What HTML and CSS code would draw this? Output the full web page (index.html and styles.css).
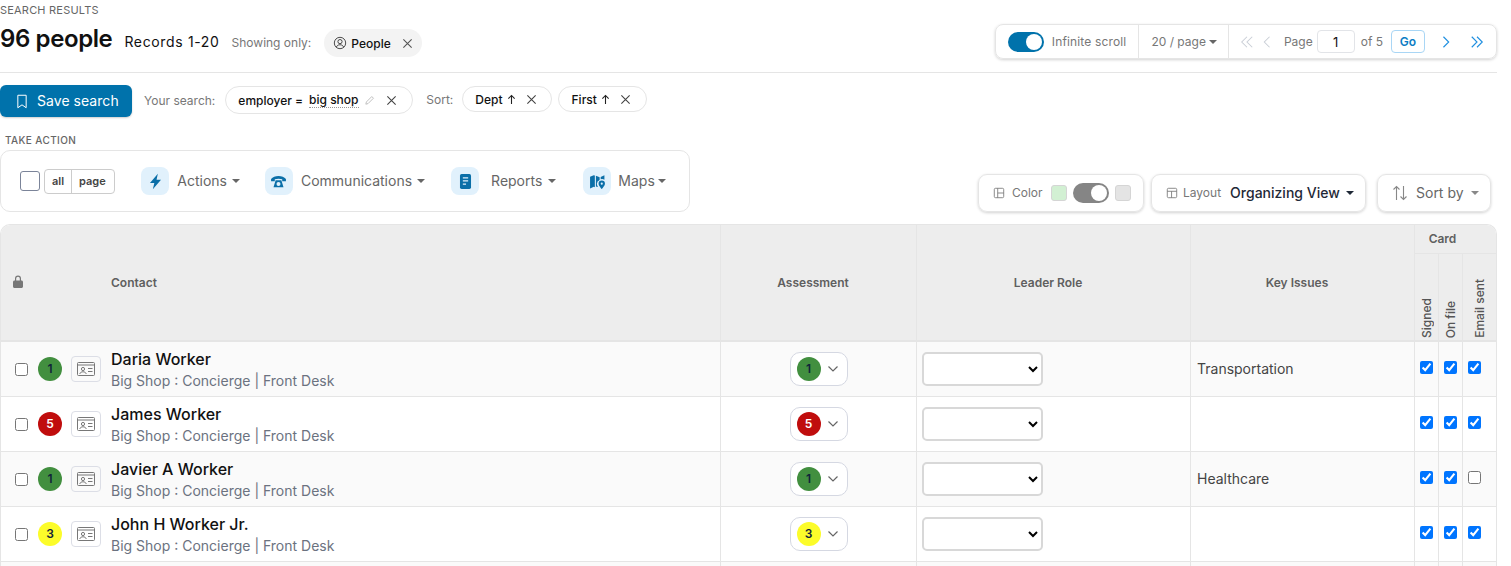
FILE: index.html
```html
<!DOCTYPE html>
<html lang="en">
<head>
    <meta charset="UTF-8" />
    <meta name="viewport" content="width=device-width, initial-scale=1" />
    <title>Search results</title>
    <link rel="stylesheet" href="styles.css">
</head>
<body>
    <div class="page">
        <header class="results-head">
            <div class="results-title">
                <div class="eyebrow">Search results</div>
                <div class="title-row">
                    <h1>96 people</h1>
                    <span class="records">Records 1-20</span>
                    <span class="muted">Showing only:</span>
                    <span class="people-chip">
                        <svg class="ico-person" viewBox="0 0 16 16" fill="none" stroke="#333" stroke-width="1"><circle cx="8" cy="8" r="6.5"/><circle cx="8" cy="6.4" r="2.4"/><path d="M3.8 12.8c.7-2 2.3-2.8 4.2-2.8s3.5.8 4.2 2.8"/></svg>
                        People
                        <svg class="ico-x" viewBox="0 0 12 12" stroke="#555" stroke-width="1.2"><path d="M1.5 1.5l9 9M10.5 1.5l-9 9"/></svg>
                    </span>
                </div>
            </div>
            <div class="pager">
                <div class="pager-part">
                    <span class="toggle toggle-on"><i></i></span>
                    <span class="pager-label scroll-label">Infinite scroll</span>
                </div>
                <div class="pager-part per-page">20 / page<b class="caret"></b></div>
                <div class="pager-part pager-nav">
                    <svg class="nav-ico" viewBox="0 0 16 16" fill="none" stroke="#c9ced6" stroke-width="1.2"><path d="M8 2L2 8l6 6M14 2L8 8l6 6"/></svg>
                    <svg class="nav-ico one" viewBox="0 0 10 16" fill="none" stroke="#c9ced6" stroke-width="1.2"><path d="M8.5 2l-6 6 6 6"/></svg>
                    <span class="pager-label page-word">Page</span>
                    <input class="page-input" type="text" value="1">
                    <span class="pager-label">of 5</span>
                    <span class="go-btn">Go</span>
                    <svg class="nav-ico one next" viewBox="0 0 10 16" fill="none" stroke="#1f8fe0" stroke-width="1.3"><path d="M1.5 2l6 6-6 6"/></svg>
                    <svg class="nav-ico last" viewBox="0 0 16 16" fill="none" stroke="#1f8fe0" stroke-width="1.3"><path d="M2 2l6 6-6 6M8 2l6 6-6 6"/></svg>
                </div>
            </div>
        </header>

        <div class="search-row">
            <button class="save-btn" type="button">
                <svg viewBox="0 0 14 18" fill="none" stroke="#fff" stroke-width="1.2"><path d="M2 1.5h10v15l-5-3.5-5 3.5z"/></svg>
                Save search
            </button>
            <span class="muted your-search">Your search:</span>
            <span class="chip chip-search">
                employer =<span class="dotted">big shop</span>
                <svg class="ico-pencil" viewBox="0 0 12 12" fill="none" stroke="#bbb" stroke-width="1"><path d="M2 10l.6-2.4L8.5 1.7l1.8 1.8-5.9 5.9z"/></svg>
                <svg class="ico-x" viewBox="0 0 12 12" stroke="#444" stroke-width="1.2"><path d="M1.5 1.5l9 9M10.5 1.5l-9 9"/></svg>
            </span>
            <span class="muted sort-label">Sort:</span>
            <span class="chip chip-sort">
                Dept
                <svg class="ico-up" viewBox="0 0 10 12" fill="none" stroke="#222" stroke-width="1.2"><path d="M5 11V1.5M1.5 5L5 1.5 8.5 5"/></svg>
                <svg class="ico-x" viewBox="0 0 12 12" stroke="#444" stroke-width="1.2"><path d="M1.5 1.5l9 9M10.5 1.5l-9 9"/></svg>
            </span>
            <span class="chip chip-sort">
                First
                <svg class="ico-up" viewBox="0 0 10 12" fill="none" stroke="#222" stroke-width="1.2"><path d="M5 11V1.5M1.5 5L5 1.5 8.5 5"/></svg>
                <svg class="ico-x" viewBox="0 0 12 12" stroke="#444" stroke-width="1.2"><path d="M1.5 1.5l9 9M10.5 1.5l-9 9"/></svg>
            </span>
        </div>

        <div class="action-row">
            <div class="action-block">
                <div class="eyebrow small">Take action</div>
                <div class="action-panel">
                    <span class="big-check"></span>
                    <span class="select-group"><span>all</span><span>page</span></span>
                    <span class="action">
                        <span class="tile"><svg viewBox="0 0 16 16" fill="#0b6fa8"><path d="M10.2.8L2.8 9.3h4.1L5.5 15.2l7.7-8.8H9z"/></svg></span>
                        Actions<b class="caret"></b>
                    </span>
                    <span class="action action-comm">
                        <span class="tile"><svg viewBox="0 0 16 16" fill="#0b6fa8"><path d="M1 5.6C2.6 3.8 5 2.8 8 2.8s5.4 1 7 2.8v2.2h-3.500V5.900c-1-.4-2.200-.6-3.500-.6s-2.500.2-3.500.6v1.900H1z"/><path fill-rule="evenodd" d="M5.3 6.8h5.400l2 6.700H3.300zM8 8.400a1.900 1.900 0 1 0 0 3.800 1.900 1.900 0 0 0 0-3.800z"/></svg></span>
                        Communications<b class="caret"></b>
                    </span>
                    <span class="action action-reports">
                        <span class="tile"><svg viewBox="0 0 16 16"><rect x="2.8" y="1" width="10.4" height="14" rx="1.5" fill="#0b6fa8"/><path d="M5.5 4.5h5M5.5 7.5h5M5.5 10.5h3" stroke="#e1f1fc" stroke-width="1.2"/></svg></span>
                        Reports<b class="caret"></b>
                    </span>
                    <span class="action action-maps">
                        <span class="tile"><svg viewBox="0 0 16 16" fill="#0b6fa8"><path d="M1 3.5L4.500 2l1 .4v11L4.500 13 1 14.500zM6.500 2.700L10 4v2.500a4 4 0 0 0-2.600 3.700c0 1 .4 2 1 3l-1.900-.6zM11 3.800L14.500 2v4.400A4 4 0 0 0 11 5.900z"/><path fill-rule="evenodd" d="M12 7a3 3 0 0 1 3 3c0 1.800-3 5-3 5s-3-3.200-3-5a3 3 0 0 1 3-3zm0 2a1 1 0 1 0 0 2 1 1 0 0 0 0-2z"/></svg></span>
                        Maps<b class="caret"></b>
                    </span>
                </div>
            </div>
            <div class="view-tools">
                <div class="tool tool-color">
                    <svg class="tool-ico" viewBox="0 0 14 14" fill="none" stroke="#777" stroke-width="1"><rect x="1.5" y="1.5" width="11" height="11" rx="1.5"/><path d="M5.5 1.5v11M5.5 7h7"/></svg>
                    <span class="tool-label">Color</span>
                    <span class="swatch swatch-green"></span>
                    <span class="toggle toggle-grey"><i></i></span>
                    <span class="swatch swatch-grey"></span>
                </div>
                <div class="tool tool-layout">
                    <svg class="tool-ico" viewBox="0 0 14 14" fill="none" stroke="#777" stroke-width="1"><rect x="1.5" y="1.5" width="11" height="11" rx="1.5"/><path d="M1.5 5h11M6.5 5v7.500"/></svg>
                    <span class="tool-label">Layout</span>
                    <span class="layout-name">Organizing View</span>
                    <b class="caret dark"></b>
                </div>
                <div class="tool tool-sort">
                    <svg class="sort-ico" viewBox="0 0 16 16" fill="none" stroke="#888" stroke-width="1.1"><path d="M4.5 15V1.5M1.5 4.5l3-3 3 3M11.5 1v13.500M8.500 11.500l3 3 3-3"/></svg>
                    <span>Sort by</span>
                    <b class="caret"></b>
                </div>
            </div>
        </div>

        <div class="table-wrap">
            <table class="people-table">
                <colgroup>
                    <col class="col-tools"><col class="col-contact"><col class="col-assess"><col class="col-role"><col class="col-issues"><col class="col-card"><col class="col-card"><col class="col-card-last">
                </colgroup>
                <thead>
                    <tr class="head-top">
                        <th rowspan="2" class="th-lock">
                            <svg viewBox="1 .5 10 13" fill="#777"><path d="M3 6V4a3 3 0 0 1 6 0v2h.5c.8 0 1.5.7 1.5 1.500V12c0 .8-.7 1.500-1.500 1.500h-7C1.700 13.500 1 12.800 1 12V7.500C1 6.700 1.700 6 2.500 6zm1.200 0h3.600V4a1.800 1.800 0 0 0-3.600 0z"/></svg>
                        </th>
                        <th rowspan="2" class="th-contact">Contact</th>
                        <th rowspan="2" class="bordered th-mid">Assessment</th>
                        <th rowspan="2" class="bordered th-mid">Leader Role</th>
                        <th rowspan="2" class="bordered th-mid">Key Issues</th>
                        <th colspan="3" class="bordered th-card">Card</th>
                    </tr>
                    <tr class="head-sub">
                        <th class="bordered th-vert"><span>Signed</span></th>
                        <th class="bordered th-vert"><span>On file</span></th>
                        <th class="bordered th-vert"><span>Email sent</span></th>
                    </tr>
                </thead>
                <tbody>
                    <tr>
                        <td><div class="row-tools"><input type="checkbox"><span class="badge badge-green">1</span><span class="id-btn"><svg viewBox="0 0 18 14" fill="none" stroke="#777" stroke-width="1"><rect x=".5" y=".5" width="17" height="13" rx="1"/><path d="M.5 3h17M11 6.5h4.500M11 9.500h4.500"/><circle cx="6" cy="7" r="1.6"/><path d="M2.8 12c.3-1.500 1.500-2.200 3.200-2.200s2.900.7 3.200 2.200"/></svg></span></div></td>
                        <td class="contact"><div class="name">Daria Worker</div><div class="job">Big Shop : Concierge | Front Desk</div></td>
                        <td class="bordered center"><span class="assess"><span class="badge badge-green">1</span><svg viewBox="0 0 12 8" fill="none" stroke="#666" stroke-width="1.2"><path d="M1.5 1.5L6 6l4.500-4.500"/></svg></span></td>
                        <td class="bordered role"><select><option></option></select></td>
                        <td class="bordered issue">Transportation</td>
                        <td class="bordered check"><input type="checkbox" checked></td>
                        <td class="bordered check"><input type="checkbox" checked></td>
                        <td class="bordered check"><input type="checkbox" checked></td>
                    </tr>
                    <tr>
                        <td><div class="row-tools"><input type="checkbox"><span class="badge badge-red">5</span><span class="id-btn"><svg viewBox="0 0 18 14" fill="none" stroke="#777" stroke-width="1"><rect x=".5" y=".5" width="17" height="13" rx="1"/><path d="M.5 3h17M11 6.5h4.500M11 9.500h4.500"/><circle cx="6" cy="7" r="1.6"/><path d="M2.8 12c.3-1.500 1.500-2.200 3.200-2.200s2.900.7 3.200 2.200"/></svg></span></div></td>
                        <td class="contact"><div class="name">James Worker</div><div class="job">Big Shop : Concierge | Front Desk</div></td>
                        <td class="bordered center"><span class="assess"><span class="badge badge-red">5</span><svg viewBox="0 0 12 8" fill="none" stroke="#666" stroke-width="1.2"><path d="M1.5 1.5L6 6l4.500-4.500"/></svg></span></td>
                        <td class="bordered role"><select><option></option></select></td>
                        <td class="bordered issue"></td>
                        <td class="bordered check"><input type="checkbox" checked></td>
                        <td class="bordered check"><input type="checkbox" checked></td>
                        <td class="bordered check"><input type="checkbox" checked></td>
                    </tr>
                    <tr>
                        <td><div class="row-tools"><input type="checkbox"><span class="badge badge-green">1</span><span class="id-btn"><svg viewBox="0 0 18 14" fill="none" stroke="#777" stroke-width="1"><rect x=".5" y=".5" width="17" height="13" rx="1"/><path d="M.5 3h17M11 6.5h4.500M11 9.500h4.500"/><circle cx="6" cy="7" r="1.6"/><path d="M2.8 12c.3-1.500 1.500-2.200 3.200-2.200s2.900.7 3.200 2.200"/></svg></span></div></td>
                        <td class="contact"><div class="name">Javier A Worker</div><div class="job">Big Shop : Concierge | Front Desk</div></td>
                        <td class="bordered center"><span class="assess"><span class="badge badge-green">1</span><svg viewBox="0 0 12 8" fill="none" stroke="#666" stroke-width="1.2"><path d="M1.5 1.5L6 6l4.500-4.500"/></svg></span></td>
                        <td class="bordered role"><select><option></option></select></td>
                        <td class="bordered issue">Healthcare</td>
                        <td class="bordered check"><input type="checkbox" checked></td>
                        <td class="bordered check"><input type="checkbox" checked></td>
                        <td class="bordered check"><input type="checkbox"></td>
                    </tr>
                    <tr>
                        <td><div class="row-tools"><input type="checkbox"><span class="badge badge-yellow">3</span><span class="id-btn"><svg viewBox="0 0 18 14" fill="none" stroke="#777" stroke-width="1"><rect x=".5" y=".5" width="17" height="13" rx="1"/><path d="M.5 3h17M11 6.5h4.500M11 9.500h4.500"/><circle cx="6" cy="7" r="1.6"/><path d="M2.8 12c.3-1.500 1.500-2.200 3.200-2.200s2.900.7 3.200 2.200"/></svg></span></div></td>
                        <td class="contact"><div class="name">John H Worker Jr.</div><div class="job">Big Shop : Concierge | Front Desk</div></td>
                        <td class="bordered center"><span class="assess"><span class="badge badge-yellow">3</span><svg viewBox="0 0 12 8" fill="none" stroke="#666" stroke-width="1.2"><path d="M1.5 1.5L6 6l4.500-4.500"/></svg></span></td>
                        <td class="bordered role"><select><option></option></select></td>
                        <td class="bordered issue"></td>
                        <td class="bordered check"><input type="checkbox" checked></td>
                        <td class="bordered check"><input type="checkbox" checked></td>
                        <td class="bordered check"><input type="checkbox" checked></td>
                    </tr>
                    <tr class="row-cut">
                        <td></td><td></td><td class="bordered"></td><td class="bordered"></td><td class="bordered"></td><td class="bordered"></td><td class="bordered"></td><td class="bordered"></td>
                    </tr>
                </tbody>
            </table>
        </div>
    </div>
</body>
</html>
```

FILE: styles.css
```css
html, body {
    height: 100%;
    overflow: hidden;
}
body {
    margin: 0;
    font-family: Inter, "Noto Sans", sans-serif;
    font-size: 14px;
    color: #111;
    background-color: #ffffff;
}
svg {
    display: block;
    flex: none;
}
.page {
    width: 1497px;
}

/* top of page */
.results-head {
    display: flex;
    justify-content: space-between;
    height: 72px;
    border-bottom: 1px solid #e5e5e5;
}
.eyebrow {
    font-size: 11px;
    line-height: 14px;
    color: #666;
    text-transform: uppercase;
    letter-spacing: 0.2px;
}
.results-title {
    padding-top: 3px;
}
.title-row {
    display: flex;
    align-items: center;
    margin-top: 4px;
    height: 36px;
}
h1 {
    margin: 0 0 2px;
    font-size: 24px;
    font-weight: 600;
    letter-spacing: -0.4px;
}
.records {
    margin: 5px 0 0 12px;
    letter-spacing: 0.65px;
}
.muted {
    font-size: 12px;
    color: #777;
}
.title-row .muted {
    margin: 6px 0 0 12px;
}
.people-chip {
    display: flex;
    align-items: center;
    height: 28px;
    margin: 8px 0 0 13px;
    padding: 0 9px;
    border-radius: 14px;
    background-color: #f3f3f3;
    font-size: 12px;
    font-weight: 500;
}
.ico-person {
    width: 14px;
    height: 14px;
    margin-right: 4px;
}
.ico-x {
    width: 11px;
    height: 11px;
}
.people-chip .ico-x {
    margin-left: 11px;
}

.pager {
    display: flex;
    align-items: center;
    height: 35px;
    margin-top: 24px;
    border: 1px solid #e5e5e5;
    border-radius: 8px;
    box-shadow: 0 1px 3px rgba(0, 0, 0, 0.18);
    box-sizing: border-box;
}
.pager-part {
    display: flex;
    align-items: center;
    height: 100%;
    padding: 0 12px;
    border-left: 1px solid #e5e5e5;
}
.pager-part:first-child {
    border-left: none;
}
.pager-label, .per-page {
    font-size: 12px;
    color: #777;
}
.scroll-label {
    letter-spacing: 0.15px;
}
.per-page {
    padding-right: 11px;
}
.pager-nav {
    padding-left: 11px;
}
.toggle {
    position: relative;
    display: block;
    width: 36px;
    height: 20px;
    margin-right: 8px;
    border-radius: 10px;
    background-color: #0072ab;
}
.toggle i {
    position: absolute;
    top: 2px;
    right: 2px;
    width: 16px;
    height: 16px;
    border-radius: 50%;
    background-color: #fff;
}
.caret {
    display: inline-block;
    width: 0;
    height: 0;
    margin-left: 3px;
    border-left: 4px solid transparent;
    border-right: 4px solid transparent;
    border-top: 4px solid #666;
}
.caret.dark {
    border-top-color: #1f2937;
}
.nav-ico {
    width: 14px;
    height: 14px;
}
.nav-ico.one {
    width: 9px;
    margin-left: 8px;
}
.page-word {
    margin-left: 13px;
    margin-right: 4px;
}
.page-input {
    width: 38px;
    height: 23px;
    margin-right: 6px;
    padding: 0;
    border: 1px solid #e2e4e8;
    border-radius: 4px;
    box-sizing: border-box;
    font-family: inherit;
    font-size: 13px;
    text-align: center;
    color: #111;
}
.go-btn {
    width: 34px;
    height: 23px;
    margin-left: 8px;
    border: 1px solid #a9d6f5;
    border-radius: 4px;
    box-sizing: border-box;
    font-size: 12px;
    font-weight: 600;
    line-height: 21px;
    text-align: center;
    color: #0b7cc4;
}
.nav-ico.next {
    margin-left: 17px;
}
.nav-ico.last {
    margin-left: 19px;
}

/* search line */
.search-row {
    display: flex;
    align-items: center;
    height: 32px;
    margin-top: 12px;
}
.save-btn {
    display: flex;
    align-items: center;
    width: 132px;
    height: 32px;
    padding: 0 0 2px 16px;
    border: none;
    border-radius: 6px;
    background-color: #0072ab;
    box-shadow: 0 1px 2px rgba(0, 0, 0, 0.2);
    font-family: inherit;
    font-size: 14px;
    font-weight: 400;
    letter-spacing: 0.05px;
    color: white;
}
.save-btn svg {
    width: 12px;
    height: 15px;
    margin: 2px 9px 0 0;
}
.your-search {
    margin: 0 0 2px 12px;
}
.chip {
    display: flex;
    align-items: center;
    border: 1px solid #e5e5e5;
    border-radius: 14px;
    box-sizing: border-box;
    font-size: 12px;
    font-weight: 500;
}
.chip-search {
    width: 188px;
    height: 28px;
    margin: 0 0 2px 10px;
    padding-left: 12px;
}
.dotted {
    margin-left: 6px;
    border-bottom: 1px dotted #999;
}
.ico-pencil {
    width: 11px;
    height: 11px;
    margin-left: 5px;
}
.chip-search .ico-x {
    margin-left: 11px;
}
.sort-label {
    margin: 0 0 4px 13px;
}
.chip-sort {
    height: 26px;
    margin: 0 0 4px 9px;
    padding: 0 14px 0 12px;
}
.chip-sort + .chip-sort {
    margin-left: 6px;
    padding-left: 13px;
    padding-right: 15px;
}
.ico-up {
    width: 9px;
    height: 11px;
    margin-left: 4px;
}
.chip-sort .ico-x {
    margin-left: 10px;
}

/* take action */
.action-row {
    display: flex;
    align-items: flex-end;
    justify-content: space-between;
    margin-top: 16px;
}
.eyebrow.small {
    padding-left: 5px;
    font-size: 10px;
    font-weight: 500;
    letter-spacing: 0.4px;
}
.action-panel {
    display: flex;
    align-items: center;
    width: 690px;
    height: 62px;
    margin-top: 3px;
    padding-left: 19px;
    border: 1px solid #e5e5e5;
    border-radius: 10px;
    box-sizing: border-box;
}
.big-check {
    width: 20px;
    height: 20px;
    border: 1px solid #7b8499;
    border-radius: 3px;
    box-sizing: border-box;
}
.select-group {
    display: flex;
    height: 25px;
    margin-left: 4px;
    border: 1px solid #ccc;
    border-radius: 4px;
    box-sizing: border-box;
    font-size: 11px;
    font-weight: 600;
    line-height: 23px;
    color: #444;
}
.select-group span {
    padding: 0 7px;
}
.select-group span + span {
    border-left: 1px solid #ccc;
    padding-right: 8.5px;
}
.action {
    display: flex;
    align-items: center;
    margin-left: 26px;
    padding-bottom: 2px;
    color: #666;
}
.action-comm {
    margin-left: 25px;
}
.tile {
    display: flex;
    align-items: center;
    justify-content: center;
    width: 28px;
    height: 28px;
    margin: 2px 8px 0 0;
    border-radius: 8px;
    background-color: #e1f1fc;
}
.tile svg {
    width: 17px;
    height: 17px;
}
.action .caret {
    margin: 2px 0 0 5px;
}
.action-reports .tile {
    margin-right: 12px;
}
.action-reports .caret {
    margin-left: 6px;
}
.action-maps {
    margin-left: 27px;
}
.action-maps .tile {
    margin-right: 7px;
}
.action-maps .caret {
    margin-left: 3px;
}

.view-tools {
    display: flex;
    align-items: center;
    margin-right: 6px;
}
.tool {
    display: flex;
    align-items: center;
    height: 38px;
    padding-bottom: 1px;
    border: 1px solid #e5e5e5;
    border-radius: 9px;
    box-sizing: border-box;
    box-shadow: 0 1px 3px rgba(0, 0, 0, 0.18);
}
.tool-color {
    width: 166px;
    padding-left: 14px;
}
.tool-layout {
    width: 215px;
    margin-left: 7px;
    padding-left: 14px;
}
.tool-sort {
    width: 114px;
    margin-left: 11px;
    padding-left: 14px;
    color: #666;
}
.tool-ico {
    width: 12px;
    height: 12px;
}
.tool-label {
    margin-left: 7px;
    font-size: 12px;
    color: #777;
}
.tool-layout .tool-label {
    margin-left: 5px;
}
.swatch {
    width: 16px;
    height: 16px;
    border: 1px solid #d5d5d5;
    border-radius: 3px;
    box-sizing: border-box;
}
.swatch-green {
    margin-left: 8px;
    background-color: #d2f0d3;
}
.swatch-grey {
    background-color: #e4e4e4;
}
.toggle-grey {
    margin: 0 6px 0 6px;
    background-color: #858585;
}
.layout-name {
    margin-left: 9px;
    font-weight: 450;
    color: #1f2937;
}
.tool-layout .caret {
    margin-left: 6px;
}
.sort-ico {
    width: 16px;
    height: 16px;
    margin-right: 8px;
}
.tool-sort .caret {
    margin-left: 7px;
    border-top-color: #888;
}

/* people table */
.table-wrap {
    width: 1497px;
    margin-top: 12px;
    border-left: 1px solid #e5e5e5;
    border-right: 1px solid #e5e5e5;
    border-top: 1px solid #e5e5e5;
    border-radius: 10px 10px 0 0;
    box-sizing: border-box;
    overflow: hidden;
}
.people-table {
    width: 1495px;
    table-layout: fixed;
    border-collapse: separate;
    border-spacing: 0;
}
.col-tools { width: 104px; }
.col-contact { width: 615px; }
.col-assess { width: 196px; }
.col-role { width: 274px; }
.col-issues { width: 224px; }
.col-card { width: 24px; }
.col-card-last { width: 34px; }

.people-table th {
    padding: 0;
    background-color: #ededed;
    font-size: 12px;
    font-weight: 600;
    color: #5f5f5f;
    border-bottom: 2px solid #e5e5e5;
    box-sizing: border-box;
}
.bordered {
    border-left: 1px solid #e5e5e5;
}
.head-top th {
    height: 29px;
}
.people-table .th-card {
    padding: 0 26px 2px 0;
    border-bottom-width: 1px;
}
.people-table .th-mid {
    padding-right: 11px;
}
.head-sub th {
    height: 88px;
}
.th-lock svg {
    width: 10px;
    height: 13px;
    margin: 0 0 2px 12px;
}
.th-contact {
    padding-left: 6px !important;
    text-align: left;
}
.th-vert {
    vertical-align: bottom;
    padding-bottom: 2px !important;
}
.th-vert span {
    display: block;
    margin: 0 auto;
    writing-mode: vertical-rl;
    transform: rotate(180deg);
    font-size: 12px;
    font-weight: 500;
    line-height: 14px;
    color: #555;
}

.people-table td {
    height: 55px;
    padding: 0;
    border-bottom: 1px solid #e5e5e5;
    box-sizing: border-box;
}
.people-table tbody tr:nth-child(odd) td {
    background-color: #fafafa;
}
.people-table .row-cut td {
    height: 4px;
    border-bottom: none;
}
.row-tools {
    display: flex;
    align-items: center;
    padding-left: 14px;
}
.row-tools input {
    margin: 0;
}
.badge {
    display: block;
    flex: none;
    width: 24px;
    height: 24px;
    border-radius: 50%;
    font-size: 12px;
    font-weight: 600;
    line-height: 24px;
    text-align: center;
}
.row-tools .badge {
    margin-left: 10px;
}
.badge-green {
    background-color: #428f3f;
    color: #11233a;
}
.badge-red {
    background-color: #c00d0d;
    color: #fff;
}
.badge-yellow {
    background-color: #fcfc2a;
    color: #11233a;
}
.id-btn {
    display: flex;
    align-items: center;
    justify-content: center;
    width: 30px;
    height: 26px;
    margin-left: 9px;
    border: 1px solid #dcdee6;
    border-radius: 4px;
    box-sizing: border-box;
}
.id-btn svg {
    width: 18px;
    height: 14px;
}
.contact {
    padding: 2px 0 0 6px !important;
}
.name {
    font-size: 16px;
    font-weight: 500;
    line-height: 20px;
    color: #111;
}
.job {
    margin-top: 2px;
    font-size: 14px;
    line-height: 20px;
    color: #6b7280;
}
.center {
    text-align: center;
}
.assess {
    display: inline-flex;
    align-items: center;
    width: 58px;
    height: 34px;
    padding-left: 6px;
    border: 1px solid #d5d8e2;
    border-radius: 10px;
    box-sizing: border-box;
    background-color: #fff;
    vertical-align: middle;
}
.assess svg {
    width: 12px;
    height: 8px;
    margin-left: 6px;
}
.role {
    padding-left: 5px !important;
}
.role select {
    display: block;
    width: 121px;
    height: 34px;
    border: 2px solid #d8d8d8;
    border-radius: 5px;
    background-color: #fff;
}
.issue {
    padding: 0 0 2px 6px !important;
    color: #444;
}
.check {
    text-align: center;
}
.check input {
    margin: 0 0 5px;
    vertical-align: middle;
}
.check:last-child {
    padding-right: 10px !important;
}
```
